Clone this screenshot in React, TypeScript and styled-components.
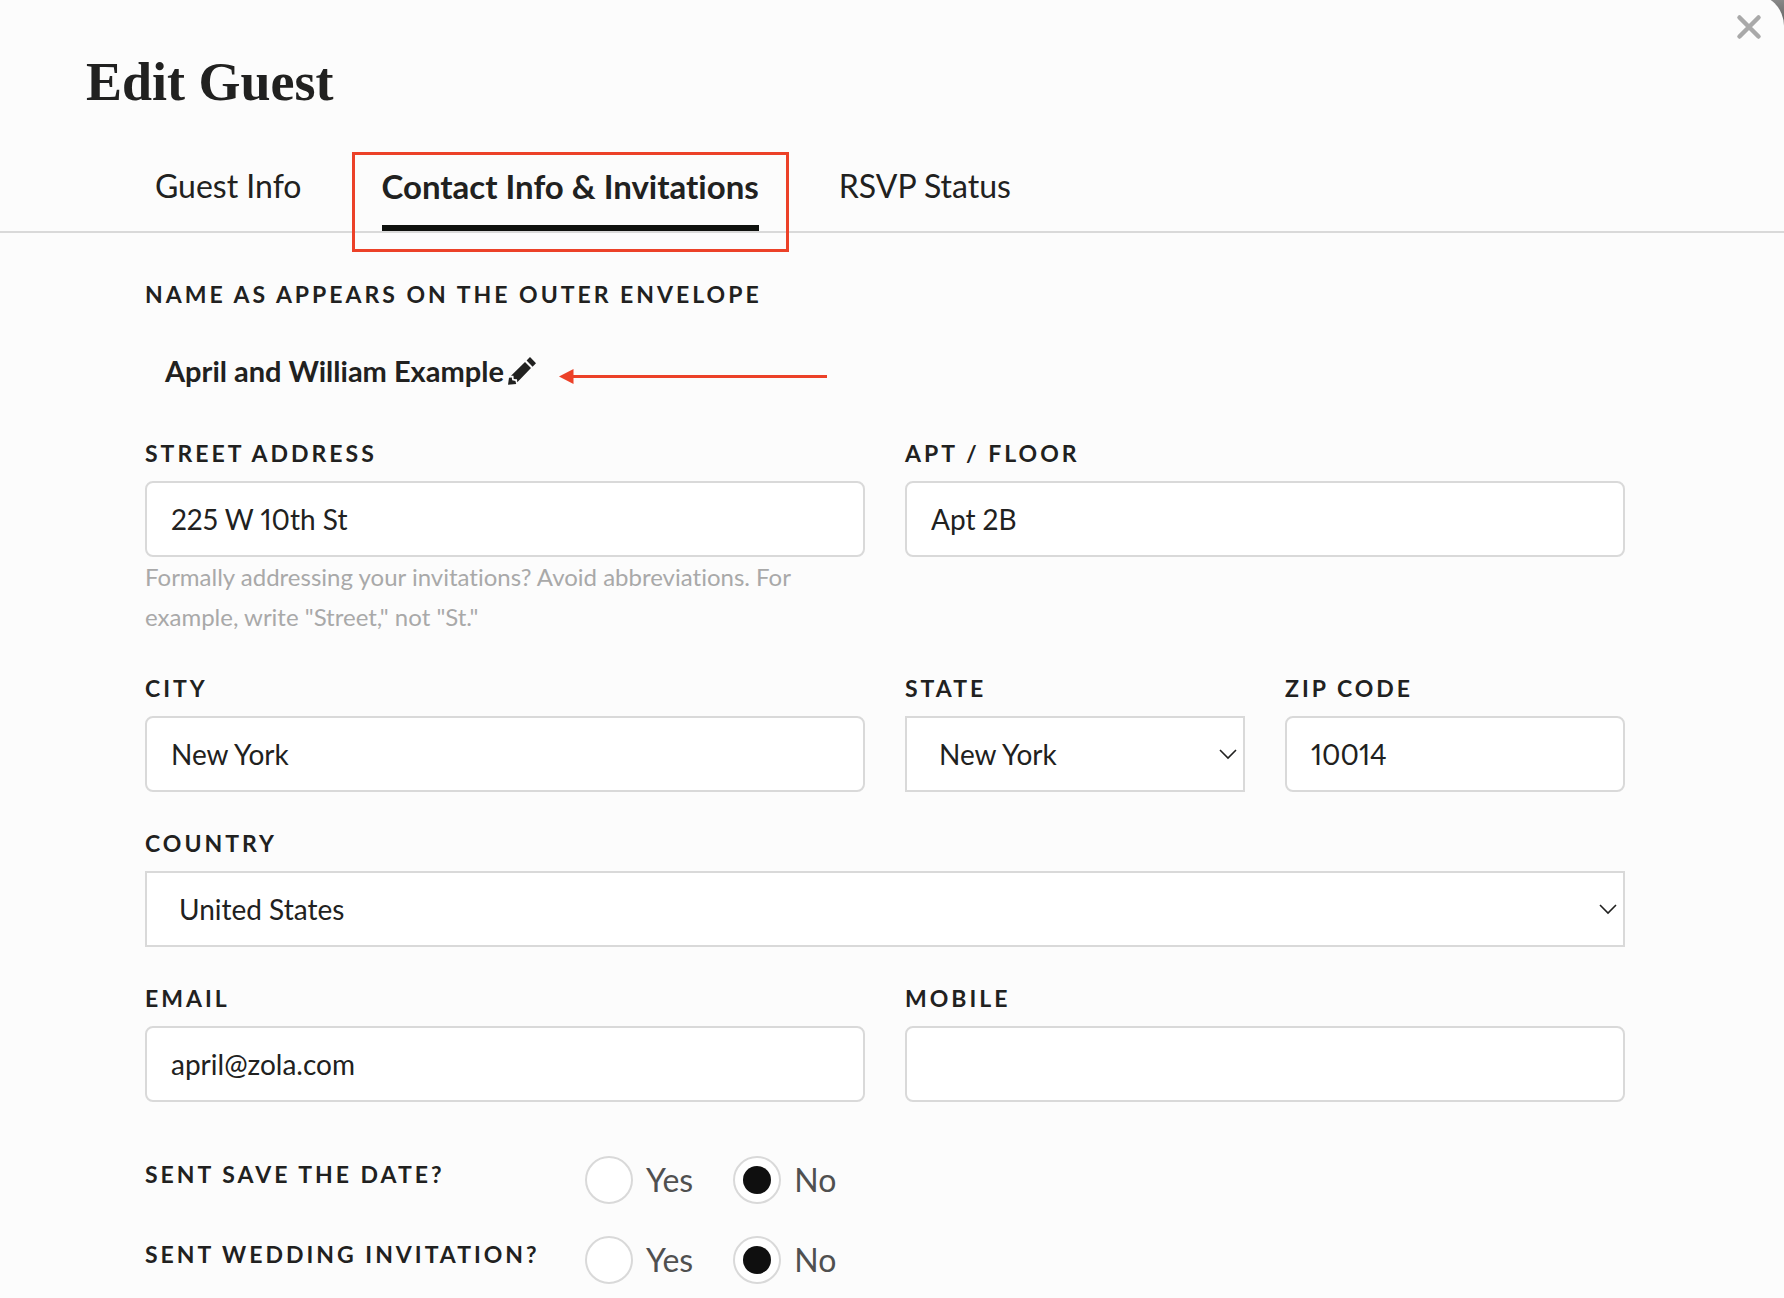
import React from 'react';
import styled, { createGlobalStyle } from 'styled-components';

const ink = '#212120';
const line = '#d9d9d9';
const marker = '#ec4128';

const GlobalStyle = createGlobalStyle`
  *, *::before, *::after { box-sizing: border-box; }
  body {
    margin: 0;
    background: linear-gradient(#888888, #555555 32px);
    color: ${ink};
    font-family: Lato, 'Liberation Sans', sans-serif;
    font-variant-ligatures: none;
    font-variant-numeric: proportional-nums;
  }
`;

const Modal = styled.main`
  position: relative;
  display: flow-root;
  min-height: calc(100vh + 6px);
  margin-top: -6px;
  padding-bottom: 14px;
  background: #fcfcfc;
  border-top-right-radius: 32px;
`;

const CloseButton = styled.button`
  position: absolute;
  top: 20px;
  right: 22px;
  display: flex;
  padding: 0;
  border: 0;
  background: none;
  color: #a9a9a9;
  cursor: pointer;
`;

const Title = styled.h1`
  margin: 58px 86px 0;
  font: 700 54px/60px 'Liberation Serif', serif;
`;

const Tabs = styled.nav`
  display: flex;
  gap: 80px;
  margin-top: 54px;
  padding: 0 155px;
  border-bottom: 2px solid ${line};
`;

const Tab = styled.button<{ $active?: boolean }>`
  position: relative;
  padding: 0 0 19px;
  border: 0;
  border-bottom: 6px solid ${(p) => (p.$active ? '#0f110e' : 'transparent')};
  background: none;
  color: inherit;
  font-family: inherit;
  font-size: ${(p) => (p.$active ? 33 : 32)}px;
  font-weight: ${(p) => (p.$active ? 700 : 400)};
  font-variant-ligatures: inherit;
  line-height: 40px;
  white-space: nowrap;
  cursor: pointer;
`;

const Highlight = styled.span`
  position: absolute;
  inset: -14px -30px -27px;
  border: 3px solid ${marker};
  pointer-events: none;
`;

const Form = styled.form`
  padding: 49px 159px 0 145px;
`;

const labelText = `
  font-size: 23px;
  font-weight: 700;
  line-height: 24px;
  letter-spacing: 3px;
  text-transform: uppercase;
`;

const SectionLabel = styled.h2`
  margin: 0;
  ${labelText}
`;

const NameRow = styled.div`
  position: relative;
  display: flex;
  align-items: center;
  gap: 4px;
  width: fit-content;
  margin: 45px 0 50px 20px;
  font-size: 29px;
  font-weight: 700;
  line-height: 40px;
`;

const EditButton = styled.button`
  display: flex;
  padding: 0;
  border: 0;
  background: none;
  color: inherit;
  cursor: pointer;
`;

const Arrow = styled.svg`
  position: absolute;
  top: 18px;
  left: calc(100% + 23px);
`;

const Grid = styled.div`
  display: grid;
  grid-template-columns: repeat(4, 1fr);
  gap: 39px 40px;
`;

const Field = styled.div<{ $span: number }>`
  grid-column: span ${(p) => p.$span};
  display: flex;
  flex-direction: column;
  min-width: 0;
`;

const Label = styled.label`
  margin-bottom: 16px;
  ${labelText}
`;

const controlStyle = `
  width: 100%;
  height: 76px;
  border: 2px solid ${line};
  background: #ffffff;
  color: inherit;
  font-family: inherit;
  font-size: 28px;
  font-variant-numeric: inherit;
`;

const Input = styled.input`
  ${controlStyle}
  padding: 0 24px;
  border-radius: 8px;
`;

const SelectWrap = styled.div`
  position: relative;
`;

const Select = styled.select`
  ${controlStyle}
  display: block;
  padding: 0 32px;
  border-radius: 0;
  appearance: none;
`;

const Chevron = styled.svg`
  position: absolute;
  top: 33px;
  right: 8px;
  pointer-events: none;
`;

const Hint = styled.p`
  margin: 0;
  color: #a9a9a9;
  font-size: 24px;
  line-height: 40px;
`;

const Questions = styled.div`
  display: flex;
  flex-direction: column;
  gap: 32px;
  margin-top: 54px;
`;

const Question = styled.div`
  display: grid;
  grid-template-columns: 440px auto;
  justify-content: start;
  align-items: start;
`;

const QuestionLabel = styled.span`
  padding-top: 6px;
  ${labelText}
`;

const Options = styled.div`
  display: flex;
  gap: 40px;
`;

const Option = styled.label`
  display: flex;
  align-items: center;
  gap: 13px;
  color: #505050;
  font-size: 32px;
  line-height: 40px;
`;

const Radio = styled.input`
  display: grid;
  place-items: center;
  width: 48px;
  height: 48px;
  margin: 0;
  border: 2px solid ${line};
  border-radius: 50%;
  background: #ffffff;
  appearance: none;

  &:checked::before {
    content: '';
    width: 28px;
    height: 28px;
    border-radius: 50%;
    background: #0f0f0f;
  }
`;

type TextFieldProps = {
  id: string;
  label: string;
  span: number;
  value?: string;
  type?: string;
  hint?: string;
};

function TextField({ id, label, span, value = '', type = 'text', hint }: TextFieldProps) {
  return (
    <Field $span={span}>
      <Label htmlFor={id}>{label}</Label>
      <Input
        id={id}
        type={type}
        defaultValue={value}
        aria-describedby={hint ? `${id}-hint` : undefined}
      />
      {hint && <Hint id={`${id}-hint`}>{hint}</Hint>}
    </Field>
  );
}

type SelectFieldProps = { id: string; label: string; span: number; value: string };

function SelectField({ id, label, span, value }: SelectFieldProps) {
  return (
    <Field $span={span}>
      <Label htmlFor={id}>{label}</Label>
      <SelectWrap>
        <Select id={id} defaultValue={value}>
          <option>{value}</option>
        </Select>
        <Chevron width="18" height="11" viewBox="0 0 18 11" fill="none" aria-hidden="true">
          <path d="M1 1L9 9L17 1" stroke={ink} strokeWidth="1.6" />
        </Chevron>
      </SelectWrap>
    </Field>
  );
}

function YesNo({ id, label }: { id: string; label: string }) {
  return (
    <Question role="radiogroup" aria-labelledby={id}>
      <QuestionLabel id={id}>{label}</QuestionLabel>
      <Options>
        <Option>
          <Radio type="radio" name={id} value="yes" />
          Yes
        </Option>
        <Option>
          <Radio type="radio" name={id} value="no" defaultChecked />
          No
        </Option>
      </Options>
    </Question>
  );
}

export default function App() {
  return (
    <>
      <GlobalStyle />
      <Modal>
        <CloseButton type="button" aria-label="Close">
          <svg width="26" height="26" viewBox="0 0 26 26" fill="none" aria-hidden="true">
            <path
              d="M3.5 3.5L22.5 22.5M22.5 3.5L3.5 22.5"
              stroke="currentColor"
              strokeWidth="4.5"
              strokeLinecap="round"
            />
          </svg>
        </CloseButton>
        <Title>Edit Guest</Title>
        <Tabs>
          <Tab type="button">Guest Info</Tab>
          <Tab type="button" $active aria-current="page">
            Contact Info &amp; Invitations
            <Highlight />
          </Tab>
          <Tab type="button">RSVP Status</Tab>
        </Tabs>
        <Form>
          <SectionLabel>Name as appears on the outer envelope</SectionLabel>
          <NameRow>
            April and William Example
            <EditButton type="button" aria-label="Edit name">
              <svg width="28" height="28" viewBox="0 0 28 28" fill="currentColor" aria-hidden="true">
                <path d="M18.6 3.4L22 0L28 6.3L24.6 9.7Z" />
                <path d="M17 5L23 11L9.3 25.3L9 22.2L5.7 21.9L5.5 18.8L3 18.7Z" />
                <path d="M1 20.7L3.8 20.5L4.2 23.3L7.4 24L8.2 27L0 27.7Z" />
              </svg>
            </EditButton>
            <Arrow width="268" height="15" viewBox="0 0 268 15" fill={marker} aria-hidden="true">
              <path d="M0 7.5L14.5 0V15Z" />
              <path d="M14 6H268V9H14Z" />
            </Arrow>
          </NameRow>
          <Grid>
            <TextField
              id="street"
              label="Street address"
              span={2}
              value="225 W 10th St"
              hint={'Formally addressing your invitations? Avoid abbreviations. For example, write "Street," not "St."'}
            />
            <TextField id="apt" label="Apt / Floor" span={2} value="Apt 2B" />
            <TextField id="city" label="City" span={2} value="New York" />
            <SelectField id="state" label="State" span={1} value="New York" />
            <TextField id="zip" label="Zip code" span={1} value="10014" />
            <SelectField id="country" label="Country" span={4} value="United States" />
            <TextField id="email" label="Email" span={2} type="email" value="april@zola.com" />
            <TextField id="mobile" label="Mobile" span={2} type="tel" />
          </Grid>
          <Questions>
            <YesNo id="save-the-date" label="Sent save the date?" />
            <YesNo id="wedding-invitation" label="Sent wedding invitation?" />
          </Questions>
        </Form>
      </Modal>
    </>
  );
}
